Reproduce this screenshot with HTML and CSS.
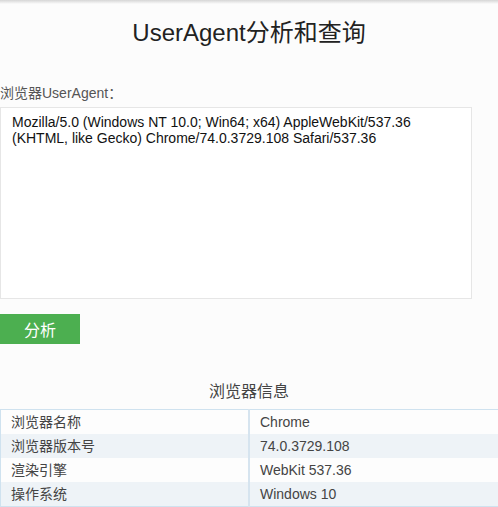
FILE: index.html
```html
<!DOCTYPE html>
<html lang="zh">
<head>
<meta charset="utf-8">
<link rel="stylesheet" href="styles.css">
</head>
<body>
<div class="topshadow"></div>
<main class="page">
  <h1 class="title">UserAgent分析和查询</h1>
  <label class="label" for="ua">浏览器UserAgent：</label>
  <div class="uabox" id="ua">Mozilla/5.0 (Windows NT 10.0; Win64; x64) AppleWebKit/537.36 (KHTML, like Gecko) Chrome/74.0.3729.108 Safari/537.36</div>
  <button class="btn">分析</button>
  <h2 class="subtitle">浏览器信息</h2>
  <table class="info">
    <tr><td class="k">浏览器名称</td><td>Chrome</td></tr>
    <tr class="alt"><td class="k">浏览器版本号</td><td>74.0.3729.108</td></tr>
    <tr><td class="k">渲染引擎</td><td>WebKit 537.36</td></tr>
    <tr class="alt"><td class="k">操作系统</td><td>Windows 10</td></tr>
  </table>
</main>
</body>
</html>
```
FILE: styles.css
```css
html, body {
  margin: 0;
  padding: 0;
  background: #fcfcfc;
  overflow: hidden;
}
body {
  font-family: "Liberation Sans", "Noto Sans CJK SC", sans-serif;
  color: #333;
}
.topshadow {
  height: 4px;
  background: linear-gradient(#d6d6d6, #fcfcfc);
}
.page {
  display: flex;
  flex-direction: column;
  align-items: flex-start;
}
.title {
  align-self: stretch;
  margin: 14px 0 0;
  text-align: center;
  font-weight: normal;
  font-size: 24px;
  line-height: 30px;
  color: #222;
}
.label {
  margin-top: 36px;
  font-size: 14px;
  line-height: 18px;
  color: #555;
}
.uabox {
  box-sizing: border-box;
  margin-top: 5px;
  width: 472px;
  height: 192px;
  padding: 6px 11px;
  background: #fff;
  border: 1px solid #e6e6e6;
  font-size: 14px;
  line-height: 16px;
  color: #111;
}
.btn {
  margin-top: 15px;
  width: 80px;
  height: 30px;
  border: 0;
  padding: 0;
  background: #4caf50;
  color: #fff;
  font-family: "Liberation Sans", "Noto Sans CJK SC", sans-serif;
  font-size: 16px;
}
.subtitle {
  align-self: stretch;
  margin: 38px 0 0;
  text-align: center;
  font-weight: normal;
  font-size: 16px;
  line-height: 20px;
  color: #444;
}
.info {
  margin-top: 7px;
  width: 540px;
  flex: none;
  border-collapse: collapse;
  border: 1px solid #cfe2ef;
  font-size: 14px;
  color: #444;
}
.info td {
  height: 24px;
  padding: 0 0 0 10px;
  line-height: 16px;
  border-left: 2px solid #d6e4ef;
}
.info td.k {
  width: 237px;
  border-left: 1px solid #cfe2ef;
}
.info tr { background: #fdfdfd; }
.info tr.alt { background: #eef3f7; }
```
